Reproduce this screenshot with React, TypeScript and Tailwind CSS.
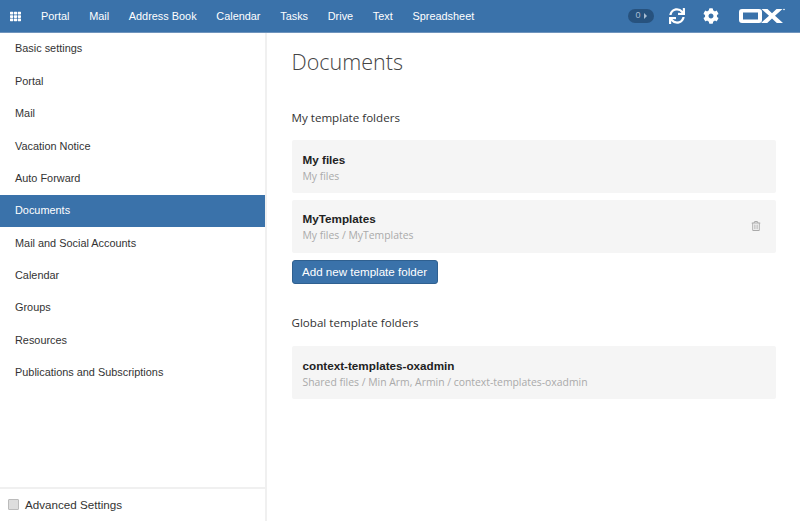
import { FaCog, FaRegTrashAlt, FaSync, FaTh } from "react-icons/fa";

const navItems = ["Portal", "Mail", "Address Book", "Calendar", "Tasks", "Drive", "Text", "Spreadsheet"];
const sideItems = [
  "Basic settings",
  "Portal",
  "Mail",
  "Vacation Notice",
  "Auto Forward",
  "Documents",
  "Mail and Social Accounts",
  "Calendar",
  "Groups",
  "Resources",
  "Publications and Subscriptions",
];

const FolderRow = ({ title, path, canDelete }: { title: string; path: string; canDelete?: boolean }) => (
  <div className="flex h-[53.400px] items-center justify-between rounded-[2px] bg-[#f5f5f5] pt-[2px] pl-[11px] pr-[15px]">
    <div>
      <div className="text-[11.700px] leading-[17px] font-bold text-[#222]">{title}</div>
      <div className="font-['Open_Sans',sans-serif] text-[10.400px] leading-[17px] text-[#aaa]">{path}</div>
    </div>
    {canDelete && <FaRegTrashAlt size={10} className="-mt-[2px] text-[#aaa]" />}
  </div>
);

const App = () => {
  return (
    <div className="flex h-[521px] w-[800px] flex-col overflow-hidden bg-white font-['Liberation_Sans',sans-serif] text-[10.900px] text-[#333]">
      {/* top bar */}
      <header className="flex h-[33px] shrink-0 items-center border-b border-[#6f94bd] bg-[#3a72aa] text-white">
        <div className="w-[41px] shrink-0 pl-[10px]">
          <FaTh size={11} />
        </div>
        <nav className="flex gap-[19.700px]">
          {navItems.map((item) => (
            <span key={item}>{item}</span>
          ))}
        </nav>
        <div className="ml-auto flex items-center pr-[15px]">
          <div className="flex h-[14px] w-[26px] items-center justify-center gap-[3px] rounded-full bg-[#27527e] text-[9px] text-[#a9bdd2]">
            0
            <span className="h-0 w-0 border-y-[3px] border-l-[3px] border-y-transparent border-l-[#a9bdd2]" />
          </div>
          <FaSync size={16} className="ml-[15px]" />
          <FaCog size={16} className="ml-[18px]" />
          <svg viewBox="0 0 46 15" className="-mt-[2px] ml-[20px] h-[15px] w-[46px]">
            <path fillRule="evenodd" fill="#fff" d="M3 1h17a3 3 0 0 1 3 3v8a3 3 0 0 1-3 3H3a3 3 0 0 1-3-3V4a3 3 0 0 1 3-3Zm1 3.500v7h15v-7Z" />
            <path fill="#fff" d="M22.500 1h6l4.500 4.300L37.500 1h6L36 7.700 44 15h-6.200L33 10.500 28.200 15H22l8-7.300Z" />
            <circle cx="45" cy="1.500" r="0.800" fill="#fff" />
          </svg>
        </div>
      </header>

      <div className="flex min-h-0 flex-1">
        {/* sidebar */}
        <aside className="flex w-[267px] shrink-0 flex-col border-r-2 border-[#f0f0f0]">
          <ul className="flex-1">
            {sideItems.map((item) => (
              <li
                key={item}
                className={
                  item === "Documents"
                    ? "flex h-[32.400px] items-center bg-[#3a72aa] pb-[1.300px] pl-[15px] text-white"
                    : "flex h-[32.400px] items-center pb-[1.300px] pl-[15px]"
                }
              >
                {item}
              </li>
            ))}
          </ul>
          <div className="flex h-[34px] items-center gap-[6px] border-t-2 border-[#f0f0f0] pb-[1px] pl-[8px] text-[11.650px]">
            <span className="h-[11px] w-[11px] rounded-[1px] border border-[#bbb] bg-[#ddd]" />
            Advanced Settings
          </div>
        </aside>

        {/* content */}
        <main className="min-w-0 flex-1 pt-[15px] pr-[24.500px] pl-[24.500px]">
          <h1 className="font-['Open_Sans',sans-serif] text-[21.500px] leading-[28px] font-light text-[#444]">Documents</h1>
          <h2 className="mt-[33px] font-['Open_Sans',sans-serif] text-[11.600px] leading-[18px] text-[#333]">My template folders</h2>
          <div className="mt-[13px] flex flex-col gap-[6.400px]">
            <FolderRow title="My files" path="My files" />
            <FolderRow title="MyTemplates" path="My files / MyTemplates" canDelete />
          </div>
          <button className="mt-[6.800px] h-[24px] w-[146px] rounded-[3px] border border-[#2f6090] bg-[#3a72aa] text-[11.600px] text-white">
            Add new template folder
          </button>
          <h2 className="mt-[30px] font-['Open_Sans',sans-serif] text-[11.600px] leading-[18px] text-[#333]">Global template folders</h2>
          <div className="mt-[14px]">
            <FolderRow title="context-templates-oxadmin" path="Shared files / Min Arm, Armin / context-templates-oxadmin" />
          </div>
        </main>
      </div>
    </div>
  );
};

export default App;
